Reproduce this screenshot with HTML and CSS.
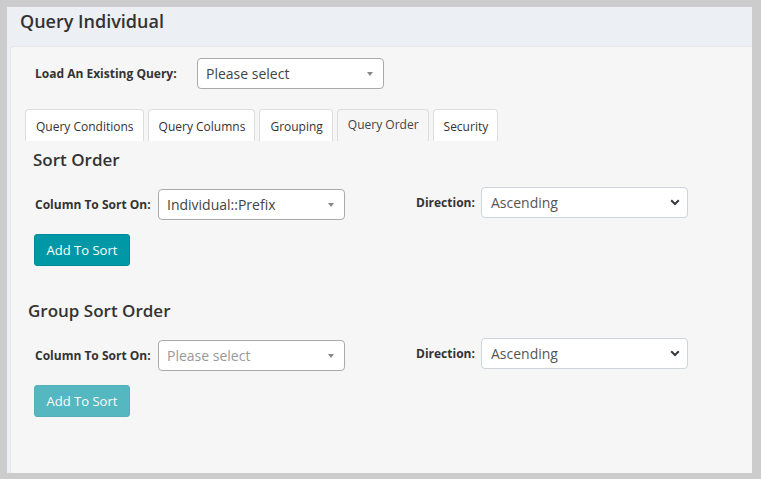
FILE: index.html
```html
<!DOCTYPE html>
<html lang="en">
<head>
  <meta charset="UTF-8" />
  <meta name="viewport" content="width=device-width, initial-scale=1.0"/>
  <title>Query Individual</title>
  <link rel="stylesheet" href="styles.css">
</head>
<body>
  <div class="panel">
    <h1 class="panel-title">Query Individual</h1>

    <div class="panel-body">
      <div class="load-row">
        <label class="load-label">Load An Existing Query:</label>
        <div class="select2 load-select">
          <span class="select2-text">Please select</span>
          <span class="select2-arrow"></span>
        </div>
      </div>

      <ul class="tabs">
        <li class="tab">Query Conditions</li>
        <li class="tab">Query Columns</li>
        <li class="tab">Grouping</li>
        <li class="tab active">Query Order</li>
        <li class="tab">Security</li>
      </ul>

      <div class="sort-section">
        <h2 class="section-title">Sort Order</h2>
        <div class="sort-row">
          <div class="field field-column">
            <label class="field-label column-label">Column To Sort On:</label>
            <div class="select2 column-select">
              <span class="select2-text">Individual::Prefix</span>
              <span class="select2-arrow"></span>
            </div>
          </div>
          <div class="field">
            <label class="field-label direction-label">Direction:</label>
            <div class="native-select">
              <span>Ascending</span>
              <svg class="chevron" width="10" height="7" viewBox="0 0 10 7"><path d="M1.2 1.3 L5 5 L8.8 1.3" fill="none" stroke="#343a40" stroke-width="2"/></svg>
            </div>
          </div>
        </div>
        <button class="btn">Add To Sort</button>
      </div>

      <div class="sort-section group-section">
        <h2 class="section-title">Group Sort Order</h2>
        <div class="sort-row">
          <div class="field field-column">
            <label class="field-label column-label">Column To Sort On:</label>
            <div class="select2 column-select">
              <span class="select2-text placeholder">Please select</span>
              <span class="select2-arrow"></span>
            </div>
          </div>
          <div class="field">
            <label class="field-label direction-label">Direction:</label>
            <div class="native-select">
              <span>Ascending</span>
              <svg class="chevron" width="10" height="7" viewBox="0 0 10 7"><path d="M1.2 1.3 L5 5 L8.8 1.3" fill="none" stroke="#343a40" stroke-width="2"/></svg>
            </div>
          </div>
        </div>
        <button class="btn disabled">Add To Sort</button>
      </div>
    </div>
  </div>
</body>
</html>
```

FILE: styles.css
```css
* {
  margin: 0;
  padding: 0;
  box-sizing: border-box;
}

body {
  font-family: 'Open Sans', 'Liberation Sans', sans-serif;
  background: #cccccc;
  width: 761px;
  height: 479px;
  padding: 7px 9px 6px 7px;
  overflow: hidden;
}

.panel {
  background: #eceff4;
  height: 466px;
  display: flex;
  flex-direction: column;
}

.panel-title {
  height: 39px;
  padding: 1px 13px 0;
  font-size: 18px;
  font-weight: 600;
  line-height: 26px;
  color: #333;
}

.panel-body {
  flex: 1;
  margin-left: 3px;
  background: #f6f6f6;
  border: 1px solid #e4e6ea;
  border-right: none;
  border-bottom: none;
  border-top-left-radius: 4px;
  padding: 11px 15px 0 14px;
}

/* load query row */
.load-row {
  display: flex;
  align-items: center;
  padding-left: 10px;
}

.load-label {
  width: 162px;
  font-size: 12px;
  font-weight: 700;
  color: #333;
}

.select2 {
  display: flex;
  align-items: center;
  justify-content: space-between;
  height: 31px;
  background: white;
  border: 1px solid #aaa;
  border-radius: 4px;
  padding: 0 10px 0 8px;
}

.select2-text {
  font-size: 14px;
  color: #444;
}

.select2-text.placeholder {
  color: #999;
}

.select2-arrow {
  width: 0;
  height: 0;
  border-left: 3.5px solid transparent;
  border-right: 3.5px solid transparent;
  border-top: 4px solid #888;
}

.load-select {
  width: 187px;
}

/* tabs */
.tabs {
  list-style: none;
  display: flex;
  margin-top: 20px;
}

.tab {
  height: 32px;
  padding: 2px 9px 0 10px;
  margin-right: 4px;
  background: white;
  border: 1px solid #ddd;
  border-bottom: none;
  border-radius: 4px 4px 0 0;
  font-size: 12px;
  line-height: 29px;
  color: #333;
}

.tab.active {
  background: #f6f6f6;
  color: #444;
  padding-top: 0;
}

/* sort sections */
.sort-section {
  padding-left: 10px;
}

.section-title {
  font-size: 17px;
  font-weight: 600;
  line-height: 24px;
  color: #333;
  margin: 7px 0 15px -2px;
}

.group-section {
  margin-top: 33px;
}

.group-section .section-title {
  margin-top: 0;
  margin-left: -7px;
}

.sort-row {
  display: grid;
  grid-template-columns: 381px 1fr;
  align-items: start;
}

.field {
  display: flex;
  align-items: center;
}

.field-column {
  margin-top: 2px;
}

.field-label {
  font-size: 12px;
  font-weight: 700;
  color: #333;
}

.column-label {
  width: 123px;
}

.direction-label {
  width: 65px;
}

.column-select {
  width: 187px;
}

.native-select {
  display: flex;
  align-items: center;
  justify-content: space-between;
  width: 207px;
  height: 31px;
  background: white;
  border: 1px solid #ced4da;
  border-radius: 4px;
  padding: 0 7px 0 9px;
  font-size: 14px;
  color: #555;
}

.btn {
  display: block;
  margin-top: 14px;
  margin-left: -1px;
  width: 96px;
  height: 32px;
  background: #0098a6;
  color: white;
  border: 1px solid #008a97;
  border-radius: 3px;
  font-family: inherit;
  font-size: 13px;
}

.btn.disabled {
  opacity: 0.65;
}
```
